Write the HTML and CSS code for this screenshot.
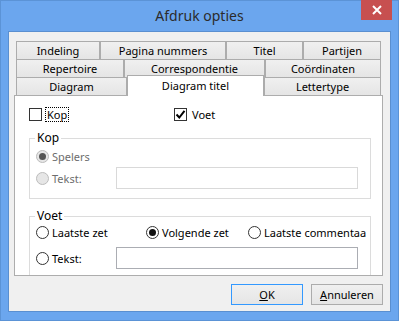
FILE: index.html
```html
<!DOCTYPE html>
<html>
<head>
    <title>Afdruk opties</title>
    <link rel="stylesheet" href="styles.css">
</head>
<body>
    <div class="window">
        <div class="titlebar">
            <span></span>
            <span class="title">Afdruk opties</span>
            <span class="close">
                <svg width="10" height="10" viewBox="0 0 10 10"><path d="M1 1 L9 9 M9 1 L1 9" stroke="#fff" stroke-width="2"/></svg>
            </span>
        </div>

        <div class="client">
            <div class="tabs">
                <div class="tab-row">
                    <div class="tab w84">Indeling</div>
                    <div class="tab w126">Pagina nummers</div>
                    <div class="tab w77">Titel</div>
                    <div class="tab w78">Partijen</div>
                </div>
                <div class="tab-row">
                    <div class="tab w108">Repertoire</div>
                    <div class="tab w141">Correspondentie</div>
                    <div class="tab w116">Coördinaten</div>
                </div>
                <div class="tab-row">
                    <div class="tab w111">Diagram</div>
                    <div class="tab w137 selected">Diagram titel</div>
                    <div class="tab w117">Lettertype</div>
                </div>
            </div>

            <div class="panel">
                <div class="check-row">
                    <div class="check-item first">
                        <span class="checkbox"></span>
                        <span class="check-label focus">Kop</span>
                    </div>
                    <div class="check-item">
                        <span class="checkbox">
                            <svg width="11" height="11" viewBox="0 0 11 11"><path d="M1.5 5.5 L4.3 8.5 L9.5 1.8" fill="none" stroke="#000" stroke-width="2"/></svg>
                        </span>
                        <span class="check-label">Voet</span>
                    </div>
                </div>

                <div class="group kop">
                    <span class="group-label">Kop</span>
                    <div class="radio-row spelers disabled">
                        <span class="radio checked"></span>
                        <span class="radio-label">Spelers</span>
                    </div>
                    <div class="radio-row text-row disabled">
                        <div class="text-option">
                            <span class="radio"></span>
                            <span class="radio-label">Tekst:</span>
                        </div>
                        <span class="textbox"></span>
                    </div>
                </div>

                <div class="group voet">
                    <span class="group-label">Voet</span>
                    <div class="radio-row choices">
                        <div class="choice c1">
                            <span class="radio"></span>
                            <span class="radio-label">Laatste zet</span>
                        </div>
                        <div class="choice c2">
                            <span class="radio checked"></span>
                            <span class="radio-label">Volgende zet</span>
                        </div>
                        <div class="choice c3">
                            <span class="radio"></span>
                            <span class="radio-label">Laatste commentaa</span>
                        </div>
                    </div>
                    <div class="radio-row text-row">
                        <div class="text-option">
                            <span class="radio"></span>
                            <span class="radio-label">Tekst:</span>
                        </div>
                        <span class="textbox"></span>
                    </div>
                </div>
            </div>

            <div class="buttons">
                <button class="btn default"><u>O</u>K</button>
                <button class="btn"><u>A</u>nnuleren</button>
            </div>
        </div>
    </div>
</body>
</html>
```

FILE: styles.css
```css
body {
    margin: 0;
    font-family: "Noto Sans", sans-serif;
    font-size: 11px;
    color: #000;
}
.window {
    width: 399px;
    height: 321px;
    background-color: #6ba6ee;
    display: flex;
    flex-direction: column;
    box-sizing: border-box;
    border: 1px solid #5b93d6;
}
.titlebar {
    height: 30px;
    display: grid;
    grid-template-columns: 1fr auto 1fr;
    align-items: start;
}
.title {
    font-size: 14px;
    line-height: 30px;
    color: #2b2b2b;
}
.close {
    justify-self: end;
    width: 31px;
    height: 20px;
    margin-right: 6px;
    margin-top: -1px;
    background-color: #c75050;
    display: flex;
    align-items: center;
    justify-content: center;
}
.client {
    flex: 1;
    margin: 0 7px 8px 7px;
    background-color: #f0f0f0;
    padding-top: 9px;
    box-sizing: border-box;
    border: 1px solid #5a8fd0;
}

/* tabs */
.tabs {
    margin-left: 7px;
    width: 365px;
}
.tab-row {
    display: flex;
    height: 18px;
}
.tab {
    box-sizing: border-box;
    height: 18px;
    border: 1px solid #acacac;
    border-bottom: none;
    background: linear-gradient(#f0f0f0, #e5e5e5);
    text-align: center;
    line-height: 17px;
    white-space: nowrap;
}
.tab.selected {
    position: relative;
    z-index: 1;
    height: 21px;
    margin-top: -2px;
    background: #fff;
    line-height: 19px;
}
.w77 { width: 77px; }
.w78 { width: 78px; }
.w84 { width: 84px; }
.w108 { width: 108px; }
.w111 { width: 111px; }
.w116 { width: 116px; }
.w117 { width: 117px; }
.w126 { width: 126px; }
.w137 { width: 137px; }
.w141 { width: 141px; }

.panel {
    margin-left: 5px;
    width: 369px;
    height: 181px;
    box-sizing: border-box;
    border: 1px solid #adadad;
    background-color: #fff;
    overflow: hidden;
}

/* checkboxes */
.check-row {
    display: flex;
    margin: 11px 0 0 14px;
    height: 15px;
    align-items: center;
}
.check-item {
    display: flex;
    align-items: center;
}
.check-item.first {
    width: 145px;
}
.checkbox {
    width: 13px;
    height: 13px;
    box-sizing: border-box;
    border: 1px solid #333;
    display: flex;
    align-items: center;
    justify-content: center;
}
.check-label {
    margin-left: 3px;
    line-height: 13px;
    padding: 0 1px;
    border: 1px solid transparent;
}
.check-label.focus {
    border: 1px dotted #000;
}

/* group boxes */
.group {
    margin-left: 14px;
    width: 342px;
    box-sizing: border-box;
    border: 1px solid #dcdcdc;
    display: flex;
    flex-direction: column;
}
.group.kop {
    margin-top: 16px;
    height: 61px;
}
.group.voet {
    margin-top: 17px;
    height: 70px;
    border-bottom: none;
}
.group-label {
    align-self: flex-start;
    margin: -9px 0 0 5px;
    padding: 0 2px;
    background-color: #fff;
    font-size: 12px;
    line-height: 16px;
}
.radio-row {
    display: flex;
    align-items: center;
    padding-left: 6px;
}
.radio {
    width: 13px;
    height: 13px;
    box-sizing: border-box;
    border: 1px solid #333;
    border-radius: 50%;
    background-color: #fff;
    display: flex;
    align-items: center;
    justify-content: center;
    flex-shrink: 0;
}
.radio.checked::after {
    content: "";
    width: 7px;
    height: 7px;
    border-radius: 50%;
    background-color: #111;
}
.radio-label {
    margin-left: 3px;
    white-space: nowrap;
}
.disabled .radio {
    border-color: #bcbcbc;
    background-color: #e6e6e6;
}
.disabled .radio.checked::after {
    background-color: #555;
}
.disabled .radio-label {
    color: #6d6d6d;
}
.spelers {
    height: 13px;
    margin-top: 4px;
}
.text-row {
    height: 22px;
}
.kop .text-row {
    margin-top: 4px;
}
.text-option {
    display: flex;
    align-items: center;
    width: 80px;
}
.textbox {
    width: 242px;
    height: 22px;
    box-sizing: border-box;
    border: 1px solid #abadb3;
    background-color: #fff;
}
.disabled .textbox {
    border-color: #d9d9d9;
}

.choices {
    height: 13px;
    margin-top: 2px;
}
.choice {
    display: flex;
    align-items: center;
}
.c1 { width: 110px; }
.c2 { width: 102px; }
.c3 { width: 115px; }
.voet .text-row {
    margin-top: 8px;
}

/* buttons */
.buttons {
    display: flex;
    justify-content: flex-end;
    gap: 8px;
    margin: 8px 7px 0 0;
}
.btn {
    width: 72px;
    height: 21px;
    font-family: "Noto Sans", sans-serif;
    font-size: 11px;
    color: #000;
    border: 1px solid #acacac;
    background: linear-gradient(#f0f0f0, #e5e5e5);
    padding: 0;
}
.btn.default {
    border-color: #3399ff;
}
```
